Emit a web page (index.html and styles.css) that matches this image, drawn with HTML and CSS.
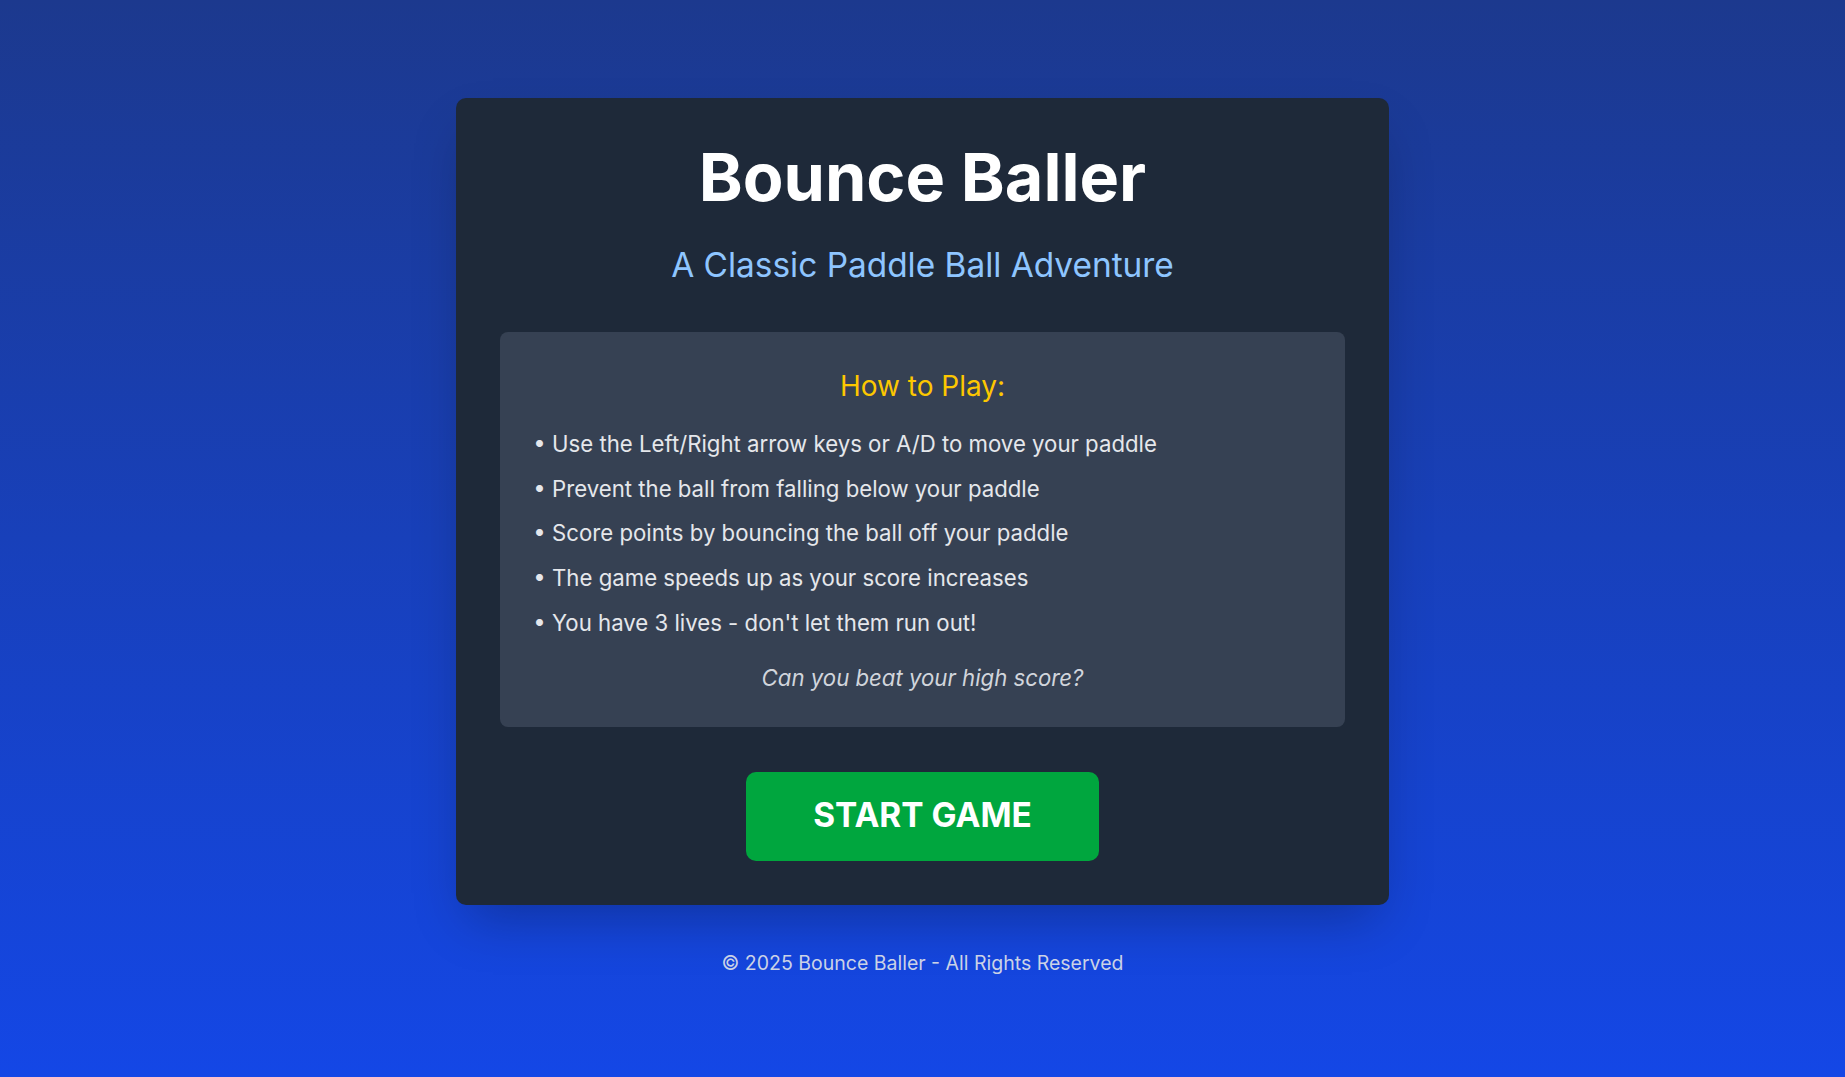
FILE: index.html
```html
<!DOCTYPE html>
<html lang="en">
<head>
<meta charset="utf-8">
<title>Bounce Baller</title>
<link rel="stylesheet" href="styles.css">
</head>
<body>
<main class="page">
  <section class="card">
    <h1 class="title">Bounce Baller</h1>
    <p class="subtitle">A Classic Paddle Ball Adventure</p>
    <div class="howto">
      <h2 class="howto-title">How to Play:</h2>
      <ul class="rules">
        <li>• Use the Left/Right arrow keys or A/D to move your paddle</li>
        <li>• Prevent the ball from falling below your paddle</li>
        <li>• Score points by bouncing the ball off your paddle</li>
        <li>• The game speeds up as your score increases</li>
        <li>• You have 3 lives - don't let them run out!</li>
      </ul>
      <p class="challenge">Can you beat your high score?</p>
    </div>
    <div class="actions">
      <button class="start">START GAME</button>
    </div>
  </section>
  <footer class="footer">© 2025 Bounce Baller - All Rights Reserved</footer>
</main>
</body>
</html>
```

FILE: styles.css
```css
* { box-sizing: border-box; }
html, body { margin: 0; padding: 0; }
body {
  font-family: Inter, "Noto Sans", sans-serif;
  background: linear-gradient(to bottom, #1c398e, #1447e6);
  min-height: 100vh;
  color: #fff;
}
.page {
  min-height: 100vh;
  display: flex;
  flex-direction: column;
  align-items: center;
  justify-content: center;
}
.card {
  width: 933px;
  background: #1e2939;
  border-radius: 10px;
  padding: 45.5px 44.3px 44.3px;
  box-shadow: 0 25px 50px -12px rgba(0, 0, 0, 0.25);
  text-align: center;
}
.title {
  margin: 0;
  font-size: 66.5px;
  line-height: 66.5px;
  font-weight: 700;
  color: #fff;
}
.subtitle {
  margin: 36px 0 0;
  font-size: 33.4px;
  line-height: 39.9px;
  color: #8ec5ff;
}
.howto {
  margin-top: 46px;
  background: #364153;
  border-radius: 8px;
  padding: 36.5px 33px 34.6px;
}
.howto-title {
  margin: 0;
  font-size: 28px;
  line-height: 35.4px;
  font-weight: 400;
  color: #fdc700;
}
.rules {
  list-style: none;
  margin: 24px 0 0;
  padding: 0;
  text-align: left;
  color: #e5e7eb;
  font-size: 22.2px;
  line-height: 31px;
}
.rules li + li { margin-top: 13.6px; }
.challenge {
  margin: 24px 0 0;
  font-size: 22.2px;
  line-height: 31px;
  font-style: italic;
  color: #d1d5dc;
}
.actions {
  margin-top: 44.7px;
  display: flex;
  justify-content: center;
}
.start {
  font-family: Inter, "Noto Sans", sans-serif;
  font-size: 33.4px;
  line-height: 39.9px;
  font-weight: 700;
  color: #fff;
  background: #00a63e;
  border: none;
  border-radius: 10px;
  padding: 24.5px 67px;
  cursor: pointer;
}
.footer {
  margin-top: 42.5px;
  font-size: 19.5px;
  line-height: 31px;
  color: #cbd2e6;
}
```
